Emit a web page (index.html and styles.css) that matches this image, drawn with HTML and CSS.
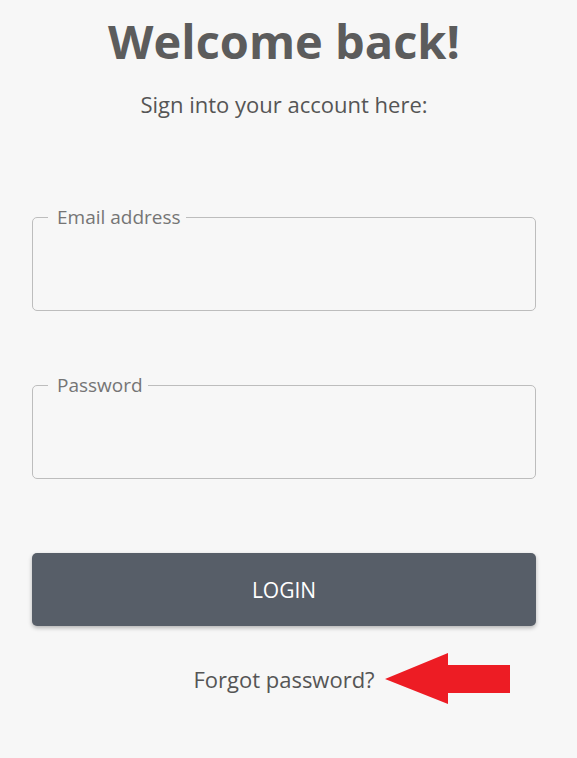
FILE: index.html
```html
<!DOCTYPE html>
<html lang="en">
<head>
<meta charset="utf-8">
<title>Welcome back</title>
<link rel="stylesheet" href="styles.css">
</head>
<body>
<main class="login">
  <h1 class="title">Welcome back!</h1>
  <p class="subtitle">Sign into your account here:</p>
  <form class="form">
    <fieldset class="field">
      <legend class="field-label">Email address</legend>
      <input class="field-input" type="email" aria-label="Email address">
    </fieldset>
    <fieldset class="field field-password">
      <legend class="field-label">Password</legend>
      <input class="field-input" type="password" aria-label="Password">
    </fieldset>
    <button class="login-btn" type="button">LOGIN</button>
    <div class="forgot-row">
      <a class="forgot" href="#">Forgot password?</a>
      <svg class="arrow" width="126" height="52" viewBox="0 0 126 52" aria-hidden="true">
        <polygon points="0,26 63,0 63,12 125,12 125,40 63,40 63,51" fill="#ed1c24"/>
      </svg>
    </div>
  </form>
</main>
</body>
</html>
```
FILE: styles.css
```css
html, body {
  margin: 0;
  padding: 0;
  background: #f7f7f7;
}
body {
  font-family: "Open Sans", "Liberation Sans", sans-serif;
  color: #555;
}
.login {
  width: 504px;
  padding: 13px 0 40px 32px;
  display: flex;
  flex-direction: column;
}
.title {
  margin: 0;
  text-align: center;
  font-size: 47px;
  line-height: 56px;
  font-weight: 700;
  color: #5c5c5c;
}
.subtitle {
  margin: 20px 0 0;
  text-align: center;
  font-size: 22px;
  line-height: 30px;
  color: #555;
}
.form {
  display: flex;
  flex-direction: column;
  margin-top: 86px;
}
.field {
  margin: 0;
  padding: 0;
  border: 1px solid #bdbdbd;
  border-radius: 5px;
  min-width: 0;
}
.field-password {
  margin-top: 62px;
}
.field-label {
  margin-left: 15px;
  padding: 0 5px 0 9px;
  font-size: 19px;
  line-height: 24px;
  color: #757575;
}
.field-input {
  display: block;
  width: 100%;
  height: 81px;
  box-sizing: border-box;
  border: none;
  background: transparent;
  outline: none;
  padding: 0 24px;
  font: inherit;
  font-size: 19px;
  color: #444;
}
.login-btn {
  margin-top: 74px;
  height: 73px;
  border: none;
  border-radius: 5px;
  background: #575e68;
  color: #fff;
  font-family: inherit;
  font-size: 21px;
  box-shadow: 0 2px 4px rgba(0, 0, 0, 0.28);
  cursor: pointer;
}
.forgot-row {
  position: relative;
  margin-top: 38px;
  text-align: center;
  line-height: 30px;
}
.forgot {
  font-size: 22px;
  color: #555;
  text-decoration: none;
}
.arrow {
  position: absolute;
  left: 353px;
  top: -11px;
}
```
